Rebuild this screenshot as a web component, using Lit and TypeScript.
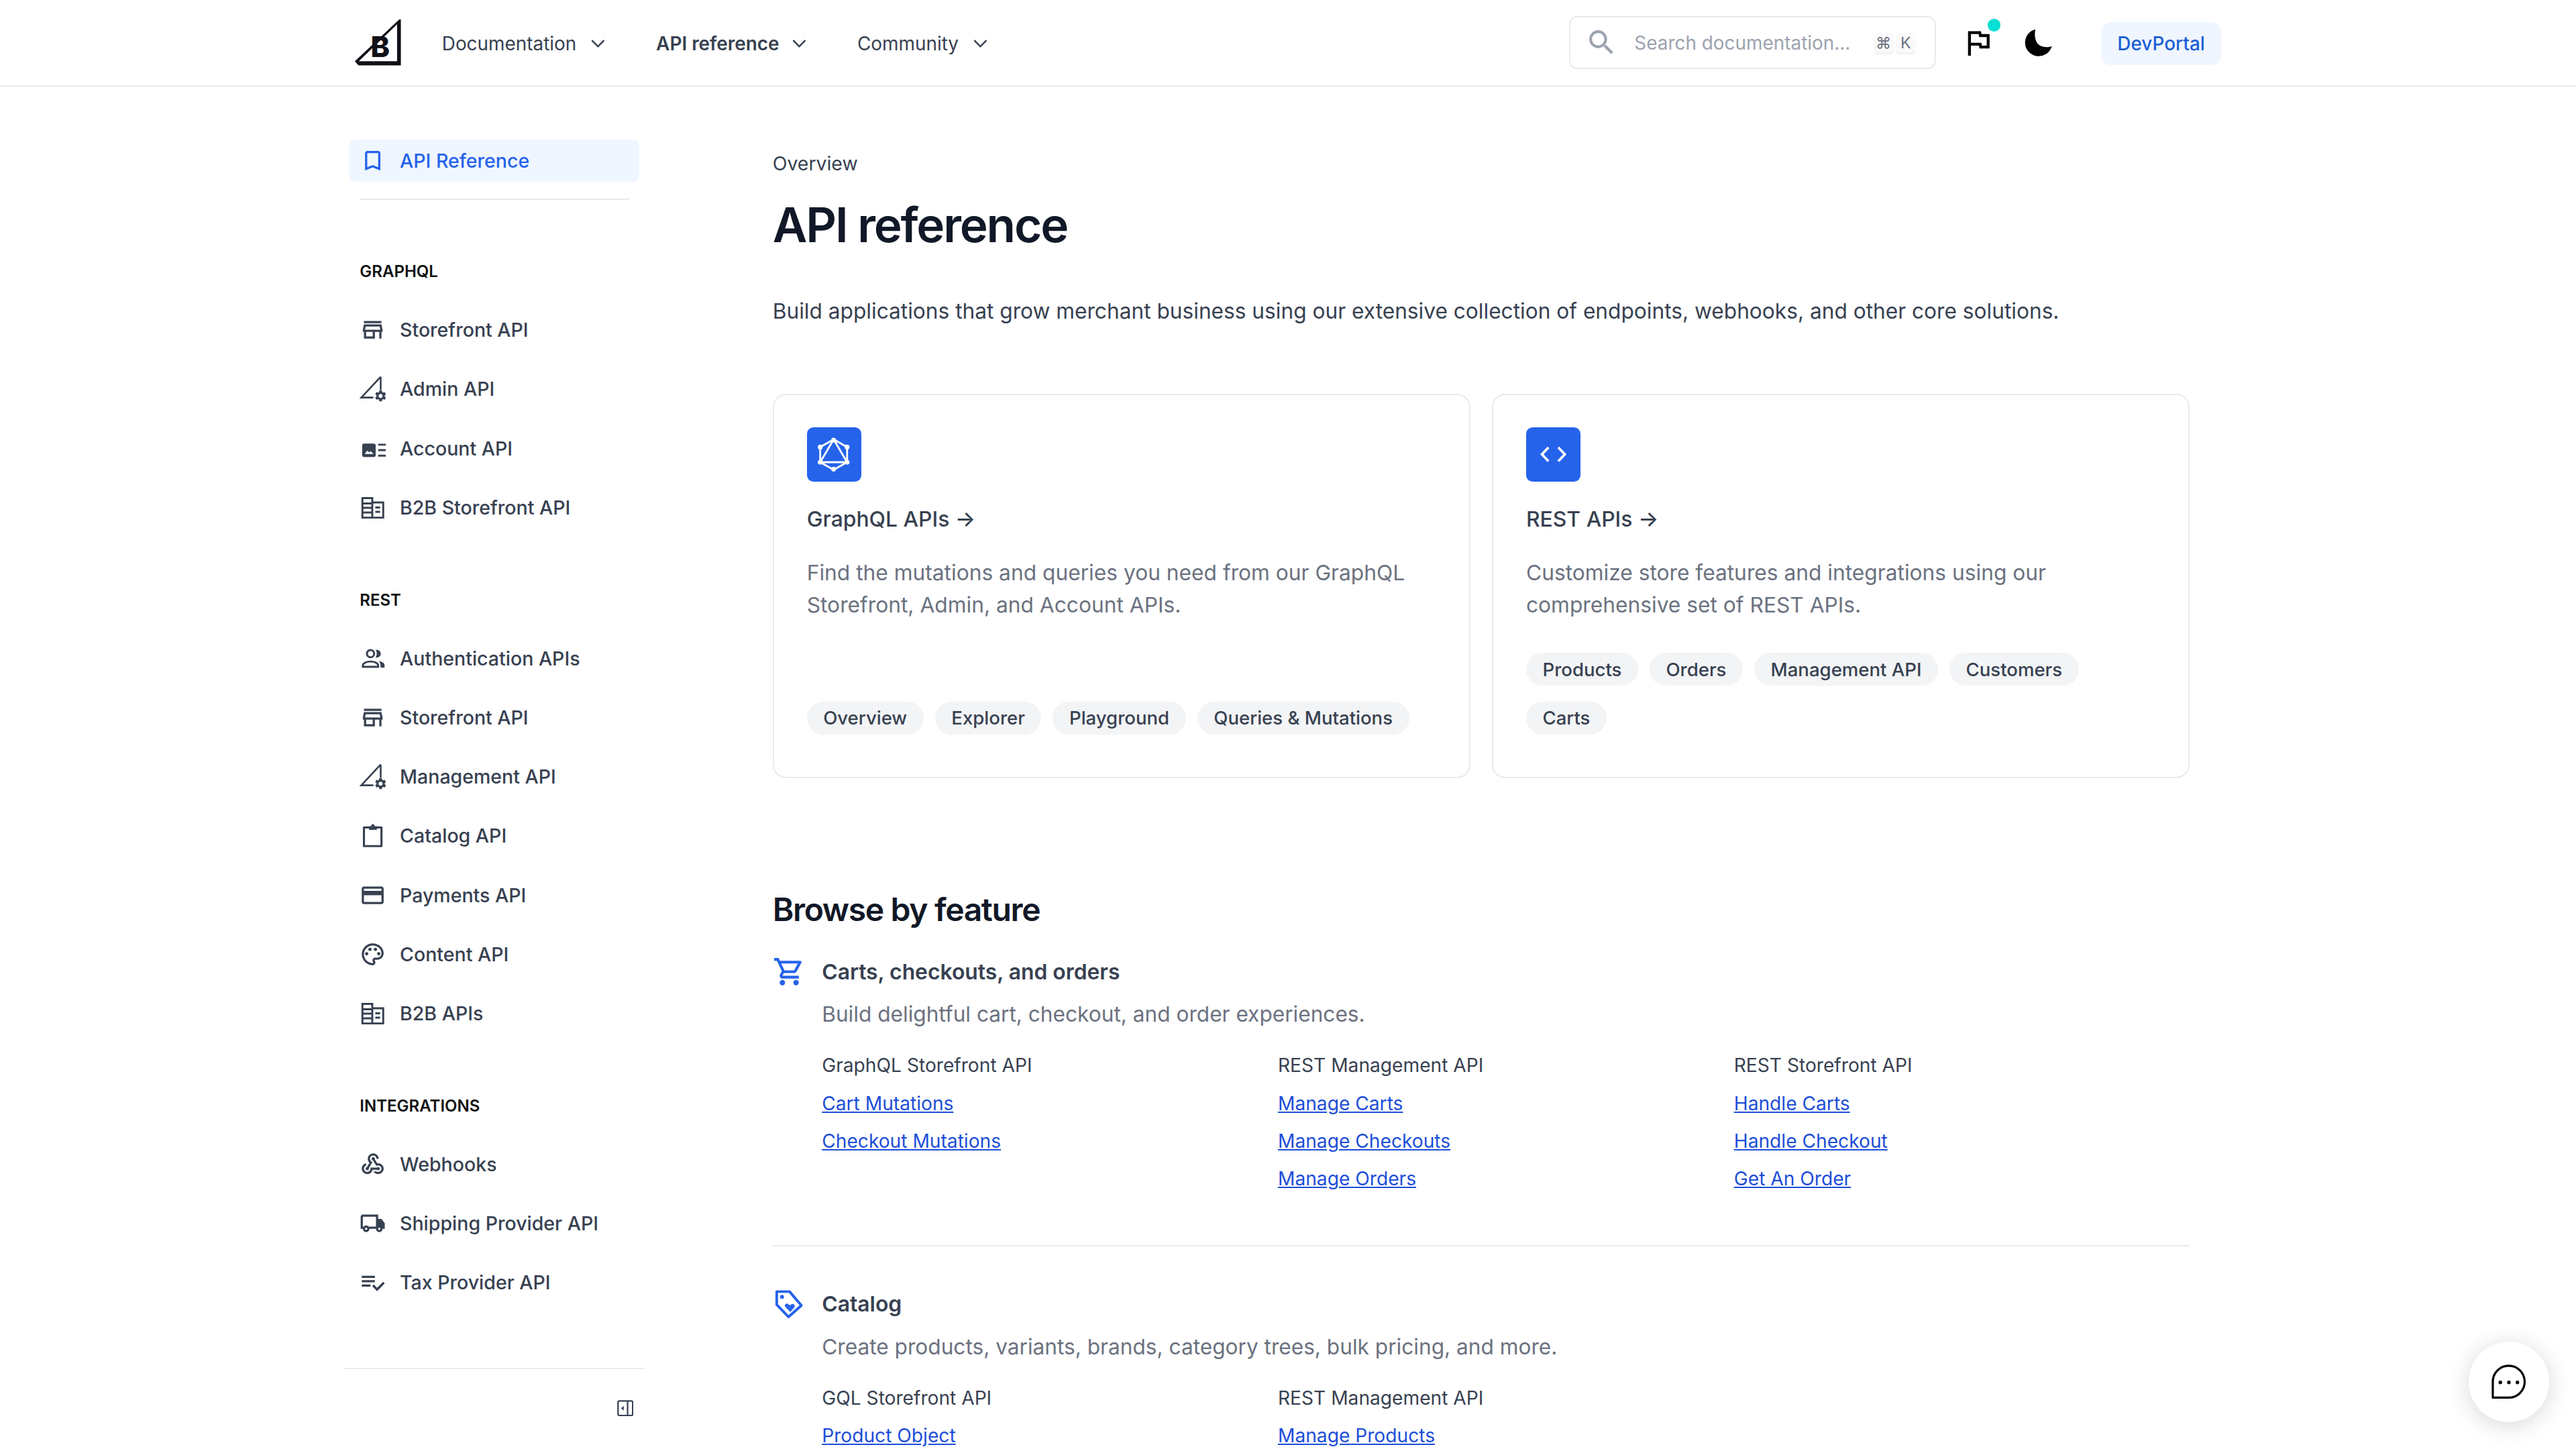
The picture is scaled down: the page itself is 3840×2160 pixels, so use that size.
import { LitElement, css, html, svg } from 'lit'
import { customElement } from 'lit/decorators.js'

// reference is laid out on a 1568 wide grid, host zoom brings it up to 3840
const M = (d: string) => svg`<path fill="currentColor" d=${d}></path>`

const ICONS: Record<string, any> = {
  bookmark: M('M17 3H7c-1.1 0-1.99.9-1.99 2L5 21l7-3 7 3V5c0-1.1-.9-2-2-2zm0 14.97l-5-2.1-5 2.1V5h10v12.97z'),
  store: M('M20 4H4v2h16V4zm1 10v-2l-1-5H4l-1 5v2h1v6h10v-6h4v6h2v-6h1zm-9 4H6v-4h6v4zm-6.96-6l.6-3h12.72l.6 3H5.04z'),
  admin: svg`
    <path fill="none" stroke="currentColor" stroke-width="1.6" d="M19.3 1v12.2M12.6 20H1.6L19.3 1"></path>
    <path fill="currentColor" transform="translate(12.96 12.26) scale(.52)" d="M19.14 12.94c.04-.3.06-.61.06-.94 0-.32-.02-.64-.07-.94l2.03-1.58c.18-.14.23-.41.12-.61l-1.92-3.32c-.12-.22-.37-.29-.59-.22l-2.39.96c-.5-.38-1.03-.7-1.62-.94l-.36-2.54c-.04-.24-.24-.41-.48-.41h-3.84c-.24 0-.43.17-.47.41l-.36 2.54c-.59.24-1.13.57-1.62.94l-2.39-.96c-.22-.08-.47 0-.59.22L2.74 8.87c-.12.21-.08.47.12.61l2.03 1.58c-.05.3-.09.63-.09.94s.02.64.07.94l-2.03 1.58c-.18.14-.23.41-.12.61l1.92 3.32c.12.22.37.29.59.22l2.39-.96c.5.38 1.03.7 1.62.94l.36 2.54c.05.24.24.41.48.41h3.84c.24 0 .44-.17.47-.41l.36-2.54c.59-.24 1.13-.56 1.62-.94l2.39.96c.22.08.47 0 .59-.22l1.92-3.32c.12-.22.07-.47-.12-.61l-2.01-1.58zM12 15.6c-1.98 0-3.6-1.62-3.6-3.6s1.62-3.6 3.6-3.6 3.6 1.62 3.6 3.6-1.62 3.6-3.6 3.6z"></path>`,
  account: svg`
    <rect x="2.4" y="8.1" width="12.3" height="12.3" rx="1.8" fill="currentColor"></rect>
    <path fill="#fff" d="M4.6 17.6l2.6-3 1.6 1.6 1.4-1.2 2.6 2.6z"></path>
    <path fill="currentColor" d="M17 8.2h7V10h-7zM17 13.2h7V15h-7zM17 18.2h7V20h-7z"></path>`,
  building: svg`
    <path fill="none" stroke="currentColor" stroke-width="1.8" d="M2.6 3.4h9v17.8h-9zM11.6 7.4h10v13.8h-10z"></path>
    <path fill="currentColor" d="M3 7.4h8.4v1.8H3zM3 11.4h8.4v1.8H3zM3 15.6h8.4v1.8H3zM14.4 11h4.4v1.8h-4.4zM14.4 15h4.4v1.8h-4.4z"></path>`,
  people: svg`
    <circle cx="10" cy="7.6" r="3.3" fill="none" stroke="currentColor" stroke-width="1.8"></circle>
    <path fill="currentColor" d="M14.6 4.2c2.4-.6 4.8 1 4.8 3.4s-2.4 4-4.8 3.4c1.5-2 1.5-4.8 0-6.8z"></path>
    <path fill="none" stroke="currentColor" stroke-width="1.8" d="M3 19.6v-1.2c0-2.2 3.4-3.6 7-3.6s7 1.4 7 3.6v1.2z"></path>
    <path fill="currentColor" d="M17.4 14.4c2.8.4 5.4 1.6 5.4 3.8v2.2h-3.6v-2c0-1.6-.7-3-1.8-4z"></path>`,
  clipboard: svg`
    <path fill="none" stroke="currentColor" stroke-width="1.9" stroke-linejoin="round" d="M4 4.6h16v17H4z"></path>
    <path fill="currentColor" d="M8.6 3.4h2c.2-1.2 1-2 1.6-2s1.4.8 1.6 2h2v3.4H8.6z"></path>`,
  card: M('M20 4H4c-1.11 0-1.99.89-1.99 2L2 18c0 1.11.89 2 2 2h16c1.11 0 2-.89 2-2V6c0-1.11-.89-2-2-2zm0 14H4v-6h16v6zm0-10H4V6h16v2z'),
  palette: svg`
    ${M('M12 22C6.49 22 2 17.51 2 12S6.49 2 12 2s10 4.04 10 9c0 3.31-2.69 6-6 6h-1.77c-.28 0-.5.22-.5.5 0 .12.05.23.13.33.41.47.64 1.06.64 1.67 0 1.38-1.12 2.5-2.5 2.5zm0-18c-4.41 0-8 3.59-8 8s3.59 8 8 8c.28 0 .5-.22.5-.5 0-.16-.08-.28-.14-.35-.41-.46-.63-1.05-.63-1.65 0-1.38 1.12-2.5 2.5-2.5H16c2.21 0 4-1.79 4-4 0-3.86-3.59-7-8-7z')}
    <circle cx="6.5" cy="11.5" r="1.5" fill="currentColor"></circle>
    <circle cx="9.5" cy="7.5" r="1.5" fill="currentColor"></circle>
    <circle cx="14.5" cy="7.5" r="1.5" fill="currentColor"></circle>
    <circle cx="17.5" cy="11.5" r="1.5" fill="currentColor"></circle>`,
  webhook: M('M10 15h5.88c.27-.31.67-.5 1.12-.5.83 0 1.5.67 1.5 1.5s-.67 1.5-1.5 1.5c-.44 0-.84-.19-1.12-.5H11.9c-.46 2.28-2.48 4-4.9 4-2.76 0-5-2.24-5-5 0-2.42 1.72-4.44 4-4.9v2.07c-1.16.41-2 1.53-2 2.83 0 1.65 1.35 3 3 3s3-1.35 3-3v-1zm2.5-11c1.65 0 3 1.35 3 3h2c0-2.76-2.24-5-5-5s-5 2.24-5 5c0 1.43.6 2.71 1.55 3.62l-2.35 3.9c-.68.14-1.2.75-1.2 1.48 0 .83.67 1.5 1.5 1.5s1.5-.67 1.5-1.5c0-.16-.02-.31-.07-.45l3.38-5.63C10.49 9.61 9.5 8.42 9.5 7c0-1.65 1.35-3 3-3zm4.5 9c-.64 0-1.23.2-1.72.54l-3.05-5.07C11.53 8.35 11 7.74 11 7c0-.83.67-1.5 1.5-1.5S14 6.17 14 7c0 .15-.02.29-.06.43l2.19 3.65c.28-.05.57-.08.87-.08 2.76 0 5 2.24 5 5s-2.24 5-5 5c-1.85 0-3.47-1.01-4.33-2.5h2.67c.48.32 1.05.5 1.66.5 1.65 0 3-1.35 3-3s-1.35-3-3-3z'),
  truck: M('M20 8h-3V4H3c-1.1 0-2 .9-2 2v11h2c0 1.66 1.34 3 3 3s3-1.34 3-3h6c0 1.66 1.34 3 3 3s3-1.34 3-3h2v-5l-3-4zM6 18c-.55 0-1-.45-1-1s.45-1 1-1 1 .45 1 1-.45 1-1 1zm2.22-3c-.55-.61-1.33-1-2.22-1s-1.67.39-2.22 1H3V6h12v9H8.22zM18 18c-.55 0-1-.45-1-1s.45-1 1-1 1 .45 1 1-.45 1-1 1z'),
  tax: M('M14 10H2v2h12v-2zm0-4H2v2h12V6zM2 16h8v-2H2v2zm19.5-4.5L23 13l-6.99 7-4.51-4.5L13 14l3.01 3 5.49-5.5z'),
}

const icon = (name: string, size = 16) => html`<svg class="ic" width=${size} height=${size} viewBox="0 0 24 24">${ICONS[name]}</svg>`

const SECTIONS = [
  { title: 'GraphQL', items: [['store', 'Storefront API'], ['admin', 'Admin API'], ['account', 'Account API'], ['building', 'B2B Storefront API']] },
  { title: 'REST', items: [['people', 'Authentication APIs'], ['store', 'Storefront API'], ['admin', 'Management API'], ['clipboard', 'Catalog API'], ['card', 'Payments API'], ['palette', 'Content API'], ['building', 'B2B APIs']] },
  { title: 'Integrations', items: [['webhook', 'Webhooks'], ['truck', 'Shipping Provider API'], ['tax', 'Tax Provider API']] },
]

const chevron = html`<svg class="chev" width="8.5" height="6" viewBox="0 0 9 6"><path fill="none" stroke="currentColor" stroke-width="1.1" d="M.6.7l3.9 4 3.9-4"></path></svg>`

@customElement('app-header')
class AppHeader extends LitElement {
  static styles = css`
    :host { display: block; }
    .bar { height: 52px; border-bottom: 1px solid #e8eaed; display: flex; align-items: center; padding-left: 216px; color: #374151; }
    .logo { display: block; margin-right: 25px; }
    .logo text { font-family: Inter, sans-serif; font-weight: 800; font-size: 17.5px; fill: #121118; }
    nav { display: flex; gap: 31px; font-size: 11.4px; margin-top: 1px; }
    .nav-item { display: flex; align-items: center; gap: 9px; }
    .nav-item.on { font-weight: 600; gap: 8px; }
    .search { margin-left: 354px; width: 223.5px; height: 32px; box-sizing: border-box; border: 1px solid #e8eaed; border-radius: 5px; display: flex; align-items: center; padding-left: 9px; color: #9ca3af; font-size: 11.4px; }
    .search .txt { margin-left: 10px; flex: 1; }
    .keys { display: flex; gap: 2px; margin-right: 12px; }
    kbd { font-family: Inter, sans-serif; font-size: 9.5px; width: 11.5px; height: 12px; display: flex; align-items: center; justify-content: center; color: #6b7280; background: #fafafa; border-radius: 2px; box-shadow: 0 1px 1px rgba(0,0,0,.06); }
    .flag { position: relative; margin-left: 15px; width: 21px; height: 21px; color: #000; }
    .flag svg { display: block; }
    .dot { position: absolute; left: 16.5px; top: -4px; width: 7.5px; height: 7.5px; border-radius: 50%; background: #06e0d4; }
    .moon { margin-left: 17.5px; color: #000; display: block; }
    .dev { margin: 1px 0 0 29px; width: 73px; height: 26px; background: #eff6ff; border-radius: 6px; color: #1d5fd6; font-size: 11.4px; font-weight: 500; display: flex; align-items: center; justify-content: center; }
  `

  render() {
    return html`
      <div class="bar">
        <svg class="logo" width="28" height="28" viewBox="0 0 28 28">
          <path fill="#121118" d="M27 0h1v28H2.2L0 25.4z"></path>
          <path fill="#fff" d="M25.7 3v22.4H2.4z"></path>
          <text x="9.6" y="23">B</text>
        </svg>
        <nav>
          <div class="nav-item">Documentation ${chevron}</div>
          <div class="nav-item on">API reference ${chevron}</div>
          <div class="nav-item">Community ${chevron}</div>
        </nav>
        <div class="search">
          <svg width="20" height="20" viewBox="0 0 24 24"><path fill="currentColor" d="M15.5 14h-.79l-.28-.27A6.471 6.471 0 0 0 16 9.5 6.5 6.5 0 1 0 9.5 16c1.61 0 3.09-.59 4.23-1.57l.27.28v.79l5 4.99L20.49 19l-4.99-5zm-6 0C7.01 14 5 11.99 5 9.5S7.01 5 9.5 5 14 7.01 14 9.5 11.99 14 9.5 14z"></path></svg>
          <span class="txt">Search documentation...</span>
          <span class="keys"><kbd>⌘</kbd><kbd>K</kbd></span>
        </div>
        <div class="flag">
          <svg width="21" height="21" viewBox="0 0 24 24"><path fill="currentColor" d="M12.36 6l.4 2H18v6h-3.36l-.4-2H7V6h5.36M14 4H5v17h2v-7h5.6l.4 2h7V6h-5.6L14 4z"></path></svg>
          <span class="dot"></span>
        </div>
        <svg class="moon" width="18" height="18" viewBox="0 0 18 18"><path fill="currentColor" d="M7 .7A8.3 8.3 0 1 0 17 11C13.5 12.2 9 11.5 7.5 8 6.5 5.5 6.5 3 7 .7z"></path></svg>
        <div class="dev">DevPortal</div>
      </div>
    `
  }
}

@customElement('side-nav')
class SideNav extends LitElement {
  static styles = css`
    :host { display: block; width: 183px; padding-top: 32px; flex: none; }
    .ic { display: block; flex: none; }
    .active { margin: 0 3px 0 3.5px; height: 26px; background: #eff6ff; border-radius: 4px; display: flex; align-items: center; gap: 8.4px; padding-left: 6.5px; color: #2563eb; font-size: 11.65px; font-weight: 500; }
    .rule { margin: 10px 9px 0 10px; height: 1px; background: #e8eaed; }
    .sec { margin-top: 28px; padding-left: 10px; }
    .rule + .sec { margin-top: 33px; }
    h3 { margin: 0 0 8px; height: 20px; line-height: 21.5px; font-size: 9.8px; font-weight: 600; color: #111; text-transform: uppercase; }
    .item { height: 36px; display: flex; align-items: center; gap: 8.4px; color: #374151; font-size: 11.65px; font-weight: 500; }
    .foot { margin-top: 34px; border-top: 1px solid #e8eaed; padding: 18.5px 6.5px 0 0; display: flex; justify-content: flex-end; color: #374151; }
  `

  render() {
    return html`
      <div class="active">${icon('bookmark')} API Reference</div>
      <div class="rule"></div>
      ${SECTIONS.map(s => html`
        <div class="sec">
          <h3>${s.title}</h3>
          ${s.items.map(([i, label]) => html`<div class="item">${icon(i)} ${label}</div>`)}
        </div>
      `)}
      <div class="foot">
        <svg width="10" height="10" viewBox="0 0 11 11"><rect x=".6" y=".6" width="9.8" height="9.8" rx="1" fill="none" stroke="currentColor" stroke-width="1"></rect><path fill="none" stroke="currentColor" stroke-width="1" d="M7 .6v9.8"></path><path fill="currentColor" d="M4.4 3.9v3.2L2.6 5.5z"></path></svg>
      </div>
    `
  }
}

const FEATURES = [
  {
    icon: 'cart',
    title: 'Carts, checkouts, and orders',
    desc: 'Build delightful cart, checkout, and order experiences.',
    cols: [
      { head: 'GraphQL Storefront API', links: ['Cart Mutations', 'Checkout Mutations'] },
      { head: 'REST Management API', links: ['Manage Carts', 'Manage Checkouts', 'Manage Orders'] },
      { head: 'REST Storefront API', links: ['Handle Carts', 'Handle Checkout', 'Get An Order'] },
    ],
  },
  {
    icon: 'tag',
    title: 'Catalog',
    desc: 'Create products, variants, brands, category trees, bulk pricing, and more.',
    cols: [
      { head: 'GQL Storefront API', links: ['Product Object'] },
      { head: 'REST Management API', links: ['Manage Products'] },
    ],
  },
]

const featureIcon = (name: string) => name === 'cart'
  ? html`<svg width="20" height="20" viewBox="0 0 24 24"><path fill="currentColor" d="M15.55 13c.75 0 1.41-.41 1.75-1.03l3.58-6.49c.37-.66-.11-1.48-.87-1.48H5.21l-.94-2H1v2h2l3.6 7.59-1.35 2.44C4.52 15.37 5.48 17 7 17h12v-2H7l1.1-2h7.45zM6.16 6h12.15l-2.76 5H8.53L6.16 6zM7 18c-1.1 0-1.99.9-1.99 2S5.9 22 7 22s2-.9 2-2-.9-2-2-2zm10 0c-1.1 0-1.99.9-1.99 2s.89 2 1.99 2 2-.9 2-2-.9-2-2-2z"></path></svg>`
  : html`<svg width="20" height="20" viewBox="0 0 20 20"><path fill="none" stroke="currentColor" stroke-width="1.6" stroke-linejoin="round" d="M2.4 2.6h7.8l7.2 8.4-7.8 7-7.2-7.4z"></path><circle cx="5.6" cy="5.8" r="1.2" fill="currentColor"></circle><path fill="currentColor" d="M10.6 15l-3-3.2c-1-1.2.9-2.8 2.1-1.4l.6.6.8-.6c1.4-1 3 .7 1.9 2z"></path></svg>`

@customElement('app-root')
class AppRoot extends LitElement {
  static styles = css`
    :host { display: block; zoom: 2.44898; width: 1568px; height: 882px; overflow: hidden; position: relative; background: #fff; font-family: Inter, "Noto Sans", sans-serif; color: #374151; }
    .page { display: flex; padding-left: 209px; }
    main { margin-left: 78.3px; width: 862.7px; padding-top: 38px; flex: none; }
    .crumb { font-size: 11.6px; line-height: 18px; }
    h1 { margin: 10px 0 0; font-size: 29px; line-height: 36px; font-weight: 600; letter-spacing: -.03em; color: #111827; }
    .lead { margin: 24.7px 0 0; font-size: 12.93px; line-height: 20px; }
    .cards { display: flex; gap: 13px; margin-top: 40.3px; }
    .card { flex: 1; box-sizing: border-box; height: 234px; border: 1px solid #e8eaed; border-radius: 8px; padding: 19.5px 20px 26px; display: flex; flex-direction: column; }
    .tile { width: 33px; height: 33px; border-radius: 4px; background: #2563eb; display: flex; align-items: center; justify-content: center; }
    .card h4 { margin: 13px 0 0; font-size: 13px; line-height: 20px; font-weight: 500; color: #374151; }
    .card p { margin: 13px 0 0; font-size: 12.96px; line-height: 19.4px; color: #6b7280; }
    .pills { margin-top: auto; display: flex; flex-wrap: wrap; gap: 9.6px 7px; }
    .pill { height: 20px; padding: 0 10px; display: flex; align-items: center; border-radius: 10px; background: #f3f4f6; font-size: 11.25px; font-weight: 500; color: #374151; }
    h2 { margin: 66px 0 0; font-size: 19.6px; line-height: 28px; font-weight: 600; letter-spacing: -.028em; color: #111827; }
    .feat { margin-top: 13.5px; }
    .feat + .feat { margin-top: 0; padding-top: 25px; border-top: 1px solid #e8eaed; }
    .feat-head { display: flex; align-items: center; gap: 10px; height: 20px; color: #2563eb; }
    .feat-head svg { display: block; flex: none; }
    .feat-head span { color: #374151; font-size: 13px; font-weight: 600; }
    .feat-desc { margin: 6.3px 0 0 30px; font-size: 12.92px; line-height: 20px; color: #6b7280; }
    .grid { margin: 9.6px 0 29.1px 30px; display: grid; grid-template-columns: repeat(3, 1fr); font-size: 11.5px; line-height: 22.9px; }
    .grid div > div { color: #374151; }
    a { display: block; width: fit-content; color: #1d4ed8; text-decoration: underline; }
    .chat { position: absolute; right: 16.5px; bottom: 16.5px; width: 49px; height: 49px; border-radius: 50%; background: #fff; box-shadow: 0 2px 14px rgba(0,0,0,.16); display: flex; align-items: center; justify-content: center; }
  `

  render() {
    return html`
      <app-header></app-header>
      <div class="page">
        <side-nav></side-nav>
        <main>
          <div class="crumb">Overview</div>
          <h1>API reference</h1>
          <p class="lead">Build applications that grow merchant business using our extensive collection of endpoints, webhooks, and other core solutions.</p>
          <div class="cards">
            <div class="card">
              <div class="tile">
                <svg width="21" height="21" viewBox="0 0 20 20" fill="none" stroke="#fff" stroke-width="1.1">
                  <path d="M10 1.2l7.8 4.4v8.8L10 18.8l-7.8-4.4V5.6zM10 1.2l7.8 13.2H2.2z"></path>
                  <g fill="#fff" stroke="none"><circle cx="10" cy="1.6" r="1.4"></circle><circle cx="17.8" cy="5.6" r="1.4"></circle><circle cx="17.8" cy="14.4" r="1.4"></circle><circle cx="10" cy="18.4" r="1.4"></circle><circle cx="2.2" cy="14.4" r="1.4"></circle><circle cx="2.2" cy="5.6" r="1.4"></circle></g>
                </svg>
              </div>
              <h4>GraphQL APIs →</h4>
              <p>Find the mutations and queries you need from our GraphQL<br>Storefront, Admin, and Account APIs.</p>
              <div class="pills">${['Overview', 'Explorer', 'Playground', 'Queries & Mutations'].map(t => html`<span class="pill">${t}</span>`)}</div>
            </div>
            <div class="card">
              <div class="tile">
                <svg width="16" height="10" viewBox="0 0 16 10" fill="none" stroke="#fff" stroke-width="1.5"><path d="M5 .8L1 5l4 4.2M11 .8L15 5l-4 4.2"></path></svg>
              </div>
              <h4>REST APIs →</h4>
              <p>Customize store features and integrations using our<br>comprehensive set of REST APIs.</p>
              <div class="pills">${['Products', 'Orders', 'Management API', 'Customers', 'Carts'].map(t => html`<span class="pill">${t}</span>`)}</div>
            </div>
          </div>
          <h2>Browse by feature</h2>
          ${FEATURES.map(f => html`
            <section class="feat">
              <div class="feat-head">${featureIcon(f.icon)}<span>${f.title}</span></div>
              <div class="feat-desc">${f.desc}</div>
              <div class="grid">
                ${f.cols.map(c => html`<div><div>${c.head}</div>${c.links.map(l => html`<a>${l}</a>`)}</div>`)}
              </div>
            </section>
          `)}
        </main>
      </div>
      <div class="chat">
        <svg width="21" height="21" viewBox="0 0 21 21"><path fill="none" stroke="#000" stroke-width="1.3" stroke-linejoin="round" d="M.8 20.2v-9.7a9.7 9.7 0 1 1 9.7 9.7z"></path><circle cx="5.4" cy="10.9" r="1.1"></circle><circle cx="10.6" cy="10.9" r="1.1"></circle><circle cx="15.8" cy="10.9" r="1.1"></circle></svg>
      </div>
    `
  }
}
